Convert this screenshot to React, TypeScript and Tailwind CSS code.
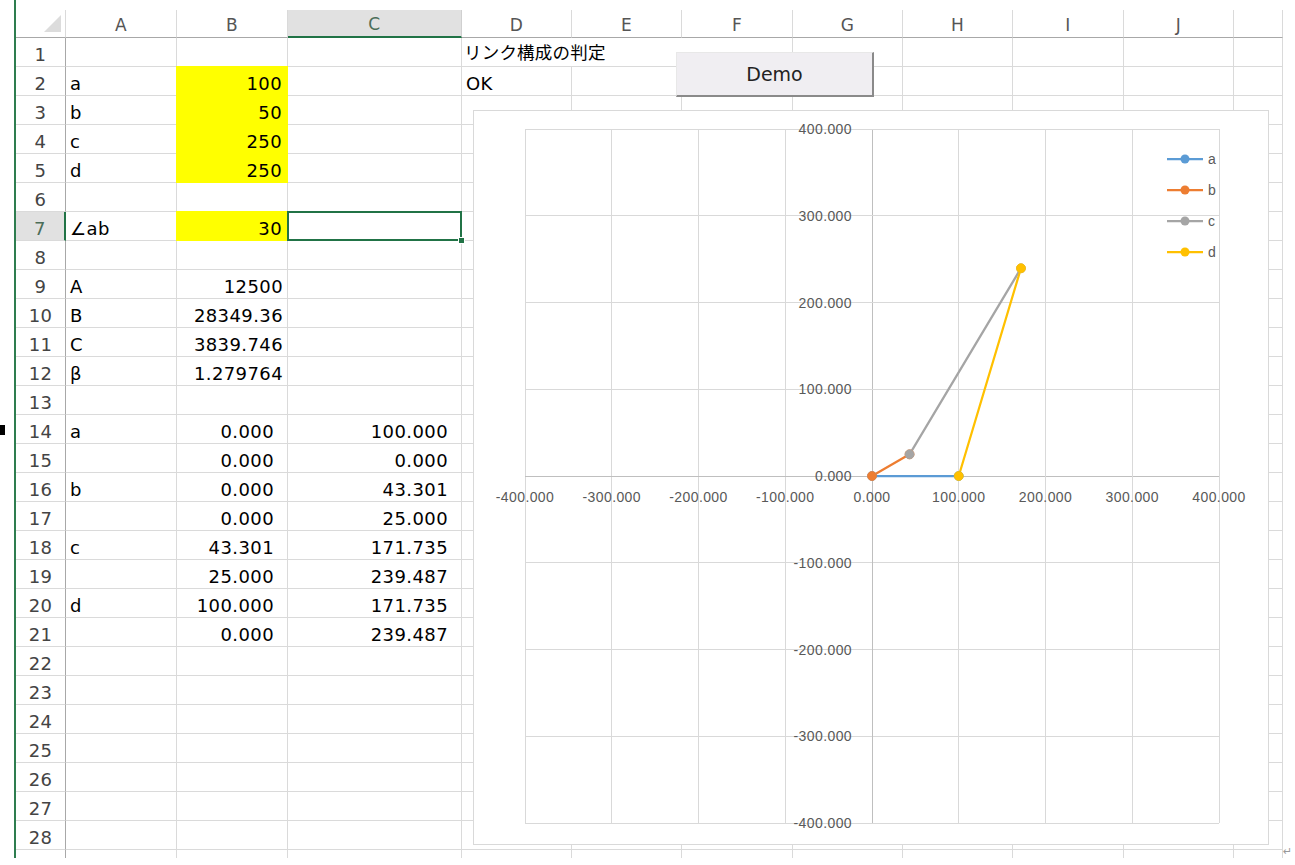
import React from 'react';

type Row = { a?: string; b?: string; c?: string; fmt?: boolean; yellow?: boolean };

const rows: Row[] = [
  {},
  { a: 'a', b: '100', yellow: true },
  { a: 'b', b: '50', yellow: true },
  { a: 'c', b: '250', yellow: true },
  { a: 'd', b: '250', yellow: true },
  {},
  { a: '∠ab', b: '30', yellow: true },
  {},
  { a: 'A', b: '12500' },
  { a: 'B', b: '28349.36' },
  { a: 'C', b: '3839.746' },
  { a: 'β', b: '1.279764' },
  {},
  { a: 'a', b: '0.000', c: '100.000', fmt: true },
  { b: '0.000', c: '0.000', fmt: true },
  { a: 'b', b: '0.000', c: '43.301', fmt: true },
  { b: '0.000', c: '25.000', fmt: true },
  { a: 'c', b: '43.301', c: '171.735', fmt: true },
  { b: '25.000', c: '239.487', fmt: true },
  { a: 'd', b: '100.000', c: '171.735', fmt: true },
  { b: '0.000', c: '239.487', fmt: true },
  {},
  {},
  {},
  {},
  {},
  {},
  {},
  {},
];

const letters = ['A', 'B', 'C', 'D', 'E', 'F', 'G', 'H', 'I', 'J', ''];

const cell = 'flex items-end whitespace-nowrap overflow-hidden border-r border-b border-[#dadada] leading-[18px] pb-[2px]';

function ColHeader({ label }: { label: string }) {
  const selected = label === 'C';
  return (
    <div
      className={
        selected
          ? 'flex items-end justify-center pb-[3px] leading-[18px] text-[17px] text-[#4b6d58] bg-[#e1e1e1] border-r border-[#d0d0d0] border-b-2 border-b-[#217346]'
          : 'flex items-end justify-center pb-[3px] leading-[18px] text-[17px] text-[#555] border-r border-[#dadada] border-b border-b-[#a8a8a8]'
      }>
      {label}
    </div>
  );
}

function RowHeader({ n }: { n: number }) {
  const selected = n === 7;
  return (
    <div
      className={
        selected
          ? 'flex items-end justify-center leading-[18px] pb-[2px] text-[#4b6d58] bg-[#e1e1e1] border-b border-[#dadada] border-r-2 border-r-[#217346]'
          : 'flex items-end justify-center leading-[18px] pb-[2px] text-[#444] border-b border-[#dadada] border-r border-r-[#a8a8a8]'
      }>
      {n}
    </div>
  );
}

function Empty() {
  return <div className={cell} />;
}

function SheetRow({ row, n }: { row: Row; n: number }) {
  return (
    <>
      <RowHeader n={n} />
      <div className={`${cell} pl-[4px]`}>{row.a}</div>
      {row.yellow ? (
        <div className="flex items-end justify-end whitespace-nowrap leading-[18px] pb-[2px] pr-[5px] -ml-px -mt-px bg-[#ffff00] border-r border-b border-[#ffff00]">
          {row.b}
        </div>
      ) : (
        <div className={`${cell} justify-end ${row.fmt ? 'pr-[13px]' : 'pr-[4px]'}`}>{row.b}</div>
      )}
      {n === 7 ? (
        <div className={`${cell} relative overflow-visible`}>
          <div className="absolute -left-px -top-px -right-px -bottom-px border-2 border-[#217346]" />
          <div className="absolute -right-[4px] -bottom-[4px] w-[7px] h-[7px] bg-[#217346] border border-white" />
        </div>
      ) : (
        <div className={`${cell} justify-end pr-[13px]`}>{row.c}</div>
      )}
      {n === 1 ? (
        <div className="col-span-2 flex items-center whitespace-nowrap border-b border-[#dadada] pl-[2px] pb-[1px] font-['Noto_Sans_CJK_JP',sans-serif] text-[17.5px] leading-[24px] tracking-[0.2px]">
          リンク構成の判定
        </div>
      ) : n === 2 ? (
        <>
          <div className={`${cell} pl-[4px]`}>OK</div>
          <Empty />
        </>
      ) : (
        <>
          <Empty />
          <Empty />
        </>
      )}
      <Empty />
      <Empty />
      <Empty />
      <Empty />
      <Empty />
      <Empty />
    </>
  );
}

function Chart() {
  const S = 86.75 / 100;
  const ox = 398;
  const oy = 365;
  const X = (v: number) => ox + v * S;
  const Y = (v: number) => oy - v * S;
  const ticks = [-400, -300, -200, -100, 0, 100, 200, 300, 400];
  const series = [
    { name: 'a', color: '#5b9bd5', pts: [[0, 0], [100, 0]] },
    { name: 'b', color: '#ed7d31', pts: [[0, 0], [43.301, 25]] },
    { name: 'c', color: '#a5a5a5', pts: [[43.301, 25], [171.735, 239.487]] },
    { name: 'd', color: '#ffc000', pts: [[100, 0], [171.735, 239.487]] },
  ];

  return (
    <div className="absolute left-[473px] top-[110px] w-[796px] h-[735px] border border-[#d9d9d9] bg-white">
      <svg width="794" height="733" className="block font-['Liberation_Sans',sans-serif]">
        {ticks.map(t => (
          <g key={t} shapeRendering="crispEdges">
            <line x1={X(t)} y1={Y(400)} x2={X(t)} y2={Y(-400)} stroke={t === 0 ? '#bfbfbf' : '#d9d9d9'} strokeWidth={1} />
            <line x1={X(-400)} y1={Y(t)} x2={X(400)} y2={Y(t)} stroke={t === 0 ? '#bfbfbf' : '#d9d9d9'} strokeWidth={1} />
          </g>
        ))}
        {ticks.map(t => (
          <text key={`y${t}`} x={378} y={Y(t) + 5} textAnchor="end" fontSize={14} fill="#595959">
            {t.toFixed(3)}
          </text>
        ))}
        {ticks.map(t => (
          <text key={`x${t}`} x={X(t)} y={391} textAnchor="middle" fontSize={14} fill="#595959">
            {t.toFixed(3)}
          </text>
        ))}
        {series.map(s => (
          <line
            key={`l${s.name}`}
            x1={X(s.pts[0][0])}
            y1={Y(s.pts[0][1])}
            x2={X(s.pts[1][0])}
            y2={Y(s.pts[1][1])}
            stroke={s.color}
            strokeWidth={2.25}
            strokeLinecap="round"
          />
        ))}
        {series.map(s =>
          s.pts.map((p, i) => (
            <circle key={`m${s.name}${i}`} cx={X(p[0])} cy={Y(p[1])} r={4.5} fill={s.color} stroke={s.color} strokeWidth={0.75} />
          )),
        )}
        {series.map((s, i) => {
          const y = 48 + i * 31;
          return (
            <g key={`g${s.name}`}>
              <line x1={693} y1={y} x2={729} y2={y} stroke={s.color} strokeWidth={2.25} />
              <circle cx={711} cy={y} r={4.5} fill={s.color} />
              <text x={734} y={y + 5} fontSize={14} fill="#595959">
                {s.name}
              </text>
            </g>
          );
        })}
      </svg>
    </div>
  );
}

export default function App() {
  return (
    <div className="relative w-[1295px] h-[865px] overflow-hidden bg-white flex font-['DejaVu_Sans','Noto_Sans_CJK_JP',sans-serif] text-[18px] tracking-[0.4px] text-black">
      <div className="w-[14px] shrink-0 flex flex-col">
        <div className="mt-[425px] w-[5px] h-[10px] bg-black" />
      </div>
      <div className="flex flex-col w-[1269px] h-[858px] shrink-0 border-l-2 border-[#2e7d4f]">
        <div className="h-[10px] shrink-0" />
        <div className="grid grid-cols-[50px_111px_111px_174px_110px_110px_111px_110px_110px_111px_110px_49px] grid-rows-[28px_repeat(29,29px)] h-[848px] overflow-hidden">
          <div className="relative border-r border-[#dadada] border-b border-b-[#a8a8a8]">
            <svg className="absolute right-[4px] bottom-[5px]" width="17" height="17" viewBox="0 0 17 17">
              <polygon points="17,0 17,17 0,17" fill="#dcdcdc" />
            </svg>
          </div>
          {letters.map((l, i) => (
            <ColHeader key={i} label={l} />
          ))}
          {rows.map((r, i) => (
            <SheetRow key={i} row={r} n={i + 1} />
          ))}
        </div>
      </div>

      <div className="absolute left-[676px] top-[52px] w-[198px] h-[45px] flex items-center justify-center bg-[#f0eef2] border-t border-l border-[#e8e8e8] border-r-2 border-b-2 border-r-[#8a8a8a] border-b-[#8a8a8a] text-[19px] text-[#222] tracking-normal">
        Demo
      </div>

      <Chart />

      <div className="absolute left-[1283px] top-[846px] text-[11px] leading-none text-[#999]">↵</div>
    </div>
  );
}
